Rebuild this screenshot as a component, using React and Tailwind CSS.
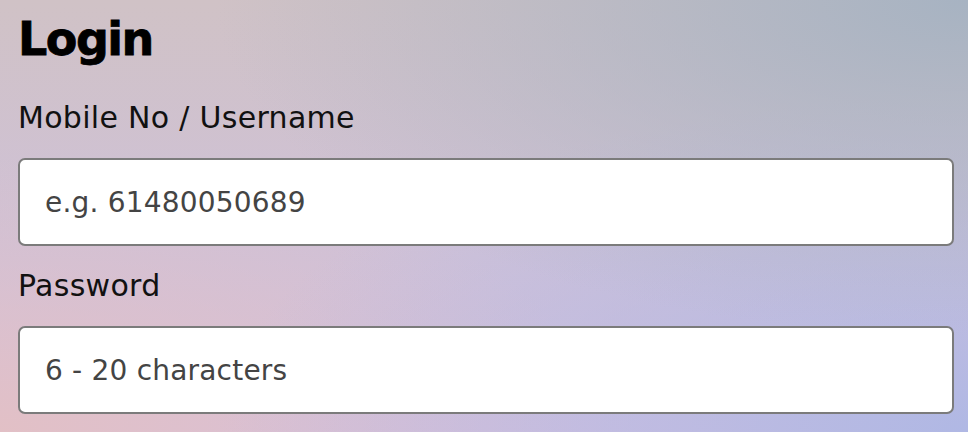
import React from "react";

export default function App() {
  return (
    <div
      className="w-[968px] h-[432px] overflow-hidden bg-[radial-gradient(ellipse_at_100%_0%,#a7b3c2_0%,rgba(167,179,194,0)_55%),radial-gradient(ellipse_at_100%_100%,#b0b8e4_0%,rgba(176,184,228,0)_55%),radial-gradient(ellipse_at_0%_100%,#e2c0c6_0%,rgba(226,192,198,0)_45%),linear-gradient(180deg,#d0c2c6_0%,#cfc1d8_60%,#d4c0de_100%)]"
      style={{ fontFamily: '"DejaVu Sans", sans-serif' }}
    >
      <div className="pt-[13px] pl-[18px] w-[954px]">
        <h1 className="text-[46px] leading-[52px] font-bold text-black tracking-[-1.5px] [-webkit-text-stroke:0.8px_black]">Login</h1>
        <div className="mt-[35px] flex flex-col">
          <label className="text-[30px] leading-[36px] text-[#111] tracking-[0.3px] mb-[22px]">Mobile No / Username</label>
          <input
            type="text"
            placeholder="e.g. 61480050689"
            className="h-[88px] w-full rounded-[7px] border-2 border-[#7b7b7b] bg-white pl-[25px] text-[28px] tracking-[0.2px] text-[#444] placeholder:text-[#444] outline-none"
          />
          <label className="mt-[22px] text-[30px] leading-[36px] text-[#111] tracking-[0.3px] mb-[22px]">Password</label>
          <input
            type="password"
            placeholder="6 - 20 characters"
            className="h-[88px] w-full rounded-[7px] border-2 border-[#7b7b7b] bg-white pl-[25px] text-[28px] tracking-[0.2px] text-[#444] placeholder:text-[#444] outline-none"
          />
        </div>
      </div>
    </div>
  );
}
